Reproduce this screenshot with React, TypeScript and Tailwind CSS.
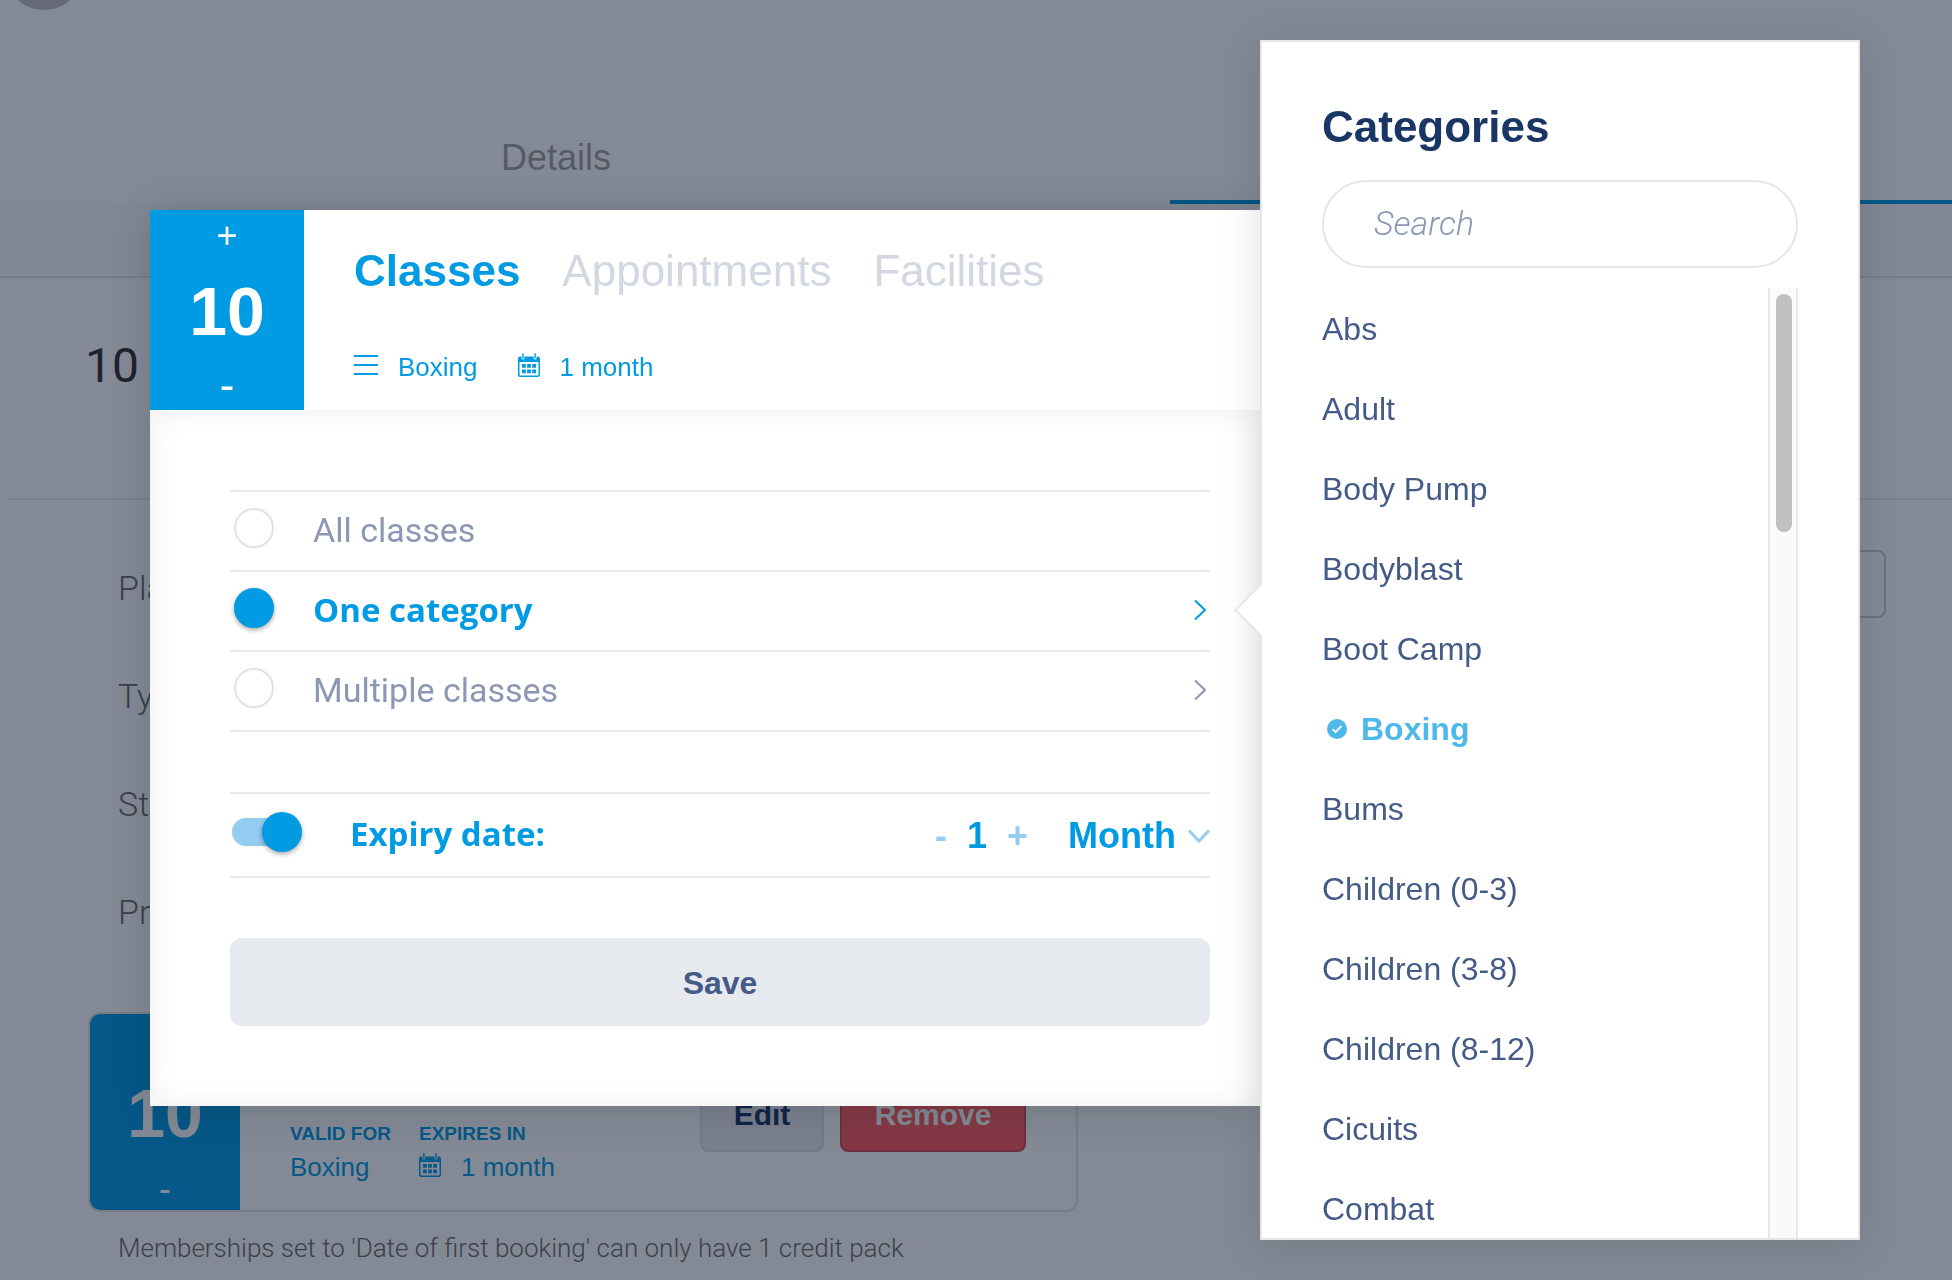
import { useState } from 'react';
import { clsx } from 'clsx';

const PLAN_FIELDS = ['Plan name', 'Type', 'Start', 'Price'];

const CREDIT_TABS = ['Classes', 'Appointments', 'Facilities'];

const CLASS_OPTIONS = [
  { id: 'all', label: 'All classes', hasMore: false },
  { id: 'one', label: 'One category', hasMore: true },
  { id: 'multiple', label: 'Multiple classes', hasMore: true },
];

const CATEGORIES = [
  'Abs',
  'Adult',
  'Body Pump',
  'Bodyblast',
  'Boot Camp',
  'Boxing',
  'Bums',
  'Children (0-3)',
  'Children (3-8)',
  'Children (8-12)',
  'Cicuits',
  'Combat',
];

function CalendarIcon() {
  return (
    <svg viewBox="0 0 22 24" className="mb-1 w-[22px] h-6 shrink-0" fill="currentColor" aria-hidden="true">
      <path
        fillRule="evenodd"
        d="M2 3.5h1.4v1.6a1.5 1.5 0 0 0 3 0V3.5h9.2v1.6a1.5 1.5 0 0 0 3 0V3.5H20a2 2 0 0 1 2 2V22a2 2 0 0 1-2 2H2a2 2 0 0 1-2-2V5.5a2 2 0 0 1 2-2ZM1.5 9v12.6a.9.9 0 0 0 .9.9h17.2a.9.9 0 0 0 .9-.9V9Z"
      />
      <rect x="4.2" width="1.4" height="5.8" rx=".7" />
      <rect x="16.4" width="1.4" height="5.8" rx=".7" />
      <path d="M4 11h3.8v3.8H4zM9.1 11h3.8v3.8H9.1zM14.2 11H18v3.8h-3.8zM4 16.5h3.8v3.8H4zM9.1 16.5h3.8v3.8H9.1zM14.2 16.5H18v3.8h-3.8z" />
    </svg>
  );
}

function MenuIcon() {
  return (
    <svg viewBox="0 0 24 20" className="mb-1 w-6 h-5 shrink-0" stroke="currentColor" strokeWidth="2" aria-hidden="true">
      <path d="M0 1h24M0 10h24M0 19h24" />
    </svg>
  );
}

function ChevronRight() {
  return (
    <svg viewBox="0 0 12 20" className="w-3 h-5" fill="none" stroke="currentColor" strokeWidth="2" aria-hidden="true">
      <path d="M1 .5l10 9.5L1 19.5" />
    </svg>
  );
}

function CheckBadge() {
  return (
    <svg viewBox="0 0 20 20" className="size-5" aria-hidden="true">
      <circle cx="10" cy="10" r="10" fill="currentColor" />
      <path d="M5.5 10.2l3.2 2.8 5.8-6" fill="none" stroke="#fff" strokeWidth="1.8" />
    </svg>
  );
}

function PageBehind() {
  return (
    <main className="min-h-screen">
      <header className="flex flex-col h-[202px]">
        <div className="-mt-[70px] ml-1 size-20 shrink-0 rounded-full bg-[#c1bfc1]" />
        <nav className="mt-auto grid grid-cols-[1170fr_782fr] text-[36px] leading-[44px] text-[#a0a0a0]">
          <a href="#details" className="pl-[501px] pb-[22px]">
            Details
          </a>
          <a href="#pricing" aria-label="Pricing" className="-mb-[2px] border-b-4 border-[#009be2]" />
        </nav>
      </header>
      <div className="h-[76px] bg-[#f9f9fa] border-b-2 border-[#e2e0e4]" />

      <h1 className="h-[220px] pt-[57px] pl-[85px] font-['Roboto'] text-[48px] leading-[62px] text-[#333]">10</h1>
      <div className="ml-2 border-t-2 border-[#ebebee]" />

      <div className="pt-[50px] pl-[118px] pr-[66px]">
        {PLAN_FIELDS.map((field, index) => (
          <div key={field} className="flex h-[108px]">
            <label
              htmlFor={`plan-${index}`}
              className="w-[600px] h-[76px] font-['Roboto'] font-light text-[34px] leading-[76px] text-[#6b6b6b]"
            >
              {field}
            </label>
            {index === 0 && (
              <input
                id={`plan-${index}`}
                className="flex-1 h-[68px] rounded-lg border-2 border-[#cbcdd3]"
              />
            )}
          </div>
        ))}
      </div>

      <section className="ml-[88px] mt-[30px] w-[990px] h-[200px] flex rounded-xl border-2 border-[#e5e3e7] overflow-hidden">
        <div className="w-[150px] bg-[#009be2] text-white flex flex-col items-center justify-between">
          <button className="h-[44px] text-[36px] leading-[44px]">+</button>
          <span className="text-[68px] leading-[76px] font-bold">10</span>
          <button className="h-[42px] text-[36px] leading-[42px]">-</button>
        </div>
        <div className="flex-1 flex px-[50px] text-[#009be2]">
          <div className="flex gap-7 pt-[106px]">
            <div>
              <p className="text-[19px] leading-7 font-bold">VALID FOR</p>
              <p className="text-[26px] leading-[38px]">Boxing</p>
            </div>
            <div>
              <p className="text-[19px] leading-7 font-bold">EXPIRES IN</p>
              <p className="flex items-center gap-5 text-[26px] leading-[38px]">
                <CalendarIcon />1 month
              </p>
            </div>
          </div>
          <div className="ml-auto flex items-center gap-4 text-[30px] font-bold">
            <button className="h-20 w-[124px] pt-1 rounded-lg border-2 border-[#dcdde6] bg-[#ebebf1] text-[#1a3665]">
              Edit
            </button>
            <button className="h-20 w-[186px] pt-1 rounded-lg border-2 border-[#d14b55] bg-[#ff5d5f] text-white">
              Remove
            </button>
          </div>
        </div>
      </section>
      <p className="pt-4 pl-[118px] font-['Roboto'] font-light text-[26px] leading-10 text-[#6b6b6b]">
        Memberships set to 'Date of first booking' can only have 1 credit pack
      </p>
    </main>
  );
}

function CreditDialog() {
  const [tab, setTab] = useState('Classes');
  const [option, setOption] = useState('one');
  const [credits, setCredits] = useState(10);
  const [expires, setExpires] = useState(true);
  const [months, setMonths] = useState(1);

  return (
    <div
      role="dialog"
      aria-label="Credit pack"
      className="mt-[170px] flex-1 min-w-0 self-start bg-white shadow-[0_4px_40px_rgba(0,0,0,0.15)]"
    >
      <div className="flex h-[200px]">
        <div className="w-[154px] shrink-0 bg-[#009be2] text-white flex flex-col items-center justify-between">
          <button onClick={() => setCredits(credits + 1)} className="h-[52px] text-[36px] leading-[52px]">
            +
          </button>
          <span className="text-[68px] leading-[76px] font-bold">{credits}</span>
          <button onClick={() => setCredits(credits - 1)} className="h-[50px] text-[44px] leading-[50px]">
            -
          </button>
        </div>
        <div className="pl-[50px] pt-[35px]">
          <div className="flex gap-[42px] text-[44px] leading-[52px]">
            {CREDIT_TABS.map((name) => (
              <button
                key={name}
                onClick={() => setTab(name)}
                className={clsx(tab === name ? 'font-bold text-[#009be2]' : 'text-[#d2d7e2]')}
              >
                {name}
              </button>
            ))}
          </div>
          <div className="mt-[50px] flex items-center text-[26px] leading-10 text-[#009be2]">
            <MenuIcon />
            <span className="ml-5 mr-10">Boxing</span>
            <CalendarIcon />
            <span className="ml-5">1 month</span>
          </div>
        </div>
      </div>

      <div className="p-20 pr-[50px] shadow-[inset_0_0_30px_rgba(0,0,0,0.07)]">
        <div className="border-t-2 border-[#e6e9ee]">
          {CLASS_OPTIONS.map((item) => {
            const isActive = option === item.id;
            return (
              <label
                key={item.id}
                className={clsx(
                  'flex h-20 pt-4 pl-1 border-b-2 border-[#e6e9ee]',
                  isActive ? 'text-[#009be2]' : 'text-[#8b97b4]'
                )}
              >
                <input
                  type="radio"
                  name="classes"
                  checked={isActive}
                  onChange={() => setOption(item.id)}
                  className="appearance-none size-10 rounded-full border-2 border-[#dee2e9] bg-white checked:border-[#009be2] checked:bg-[#009be2] checked:shadow-[0_2px_5px_rgba(0,0,0,0.35)]"
                />
                <span
                  className={clsx(
                    'ml-[39px] leading-[44px]',
                    isActive ? "font-['Open_Sans'] font-bold text-[33px]" : "font-['Roboto'] text-[34px]"
                  )}
                >
                  {item.label}
                </span>
                {item.hasMore && (
                  <span className="ml-auto mr-1 h-11 flex items-center">
                    <ChevronRight />
                  </span>
                )}
              </label>
            );
          })}
        </div>

        <div className="mt-[60px] flex items-start h-[86px] pt-4 border-y-2 border-[#e6e9ee] text-[#009be2]">
          <label className="flex items-start pl-[2px]">
            <input
              type="checkbox"
              role="switch"
              checked={expires}
              onChange={() => setExpires(!expires)}
              className="sr-only"
            />
            <span className="flex items-center w-[70px] h-11">
              <span className="w-[60px] h-7 rounded-full bg-[#95ccf1]" />
              <span className="-ml-[30px] size-10 shrink-0 rounded-full bg-[#009be2] shadow-[0_2px_5px_rgba(0,0,0,0.35)]" />
            </span>
            <span className="ml-12 font-['Open_Sans'] font-bold text-[33px] leading-[48px]">Expiry date:</span>
          </label>
          <div className="ml-auto flex items-center text-[36px] leading-[52px] font-bold">
            <button onClick={() => setMonths(months - 1)} className="text-[#95ccf1]">
              -
            </button>
            <span className="mx-5">{months}</span>
            <button onClick={() => setMonths(months + 1)} className="text-[#95ccf1]">
              +
            </button>
            <select aria-label="Expiry unit" className="ml-10 appearance-none bg-transparent">
              <option>Month</option>
            </select>
            <svg viewBox="0 0 22 14" className="ml-3 w-[22px] h-[14px]" fill="none" stroke="#95ccf1" strokeWidth="3">
              <path d="M1 1.5l10 10.5L21 1.5" />
            </svg>
          </div>
        </div>

        <button className="mt-[60px] w-full h-[88px] pt-[2px] rounded-xl bg-[#e6e9ee] text-[32px] font-bold text-[#435b86]">
          Save
        </button>
      </div>
    </div>
  );
}

function CategoriesPanel() {
  const [selected, setSelected] = useState('Boxing');
  const [query, setQuery] = useState('');
  const visible = CATEGORIES.filter((name) => name.toLowerCase().includes(query.toLowerCase()));

  return (
    <aside className="relative w-[600px] shrink-0 flex flex-col bg-white border-2 border-[#e6e6e6] px-[60px] pt-[57px] shadow-[0_6px_40px_rgba(0,0,0,0.12)]">
      <svg viewBox="0 0 28 56" className="absolute -left-7 top-[540px] w-7 h-14" aria-hidden="true">
        <path d="M28 1L1.5 28 28 55" fill="#fff" stroke="#e6e6e6" strokeWidth="2" />
      </svg>

      <h2 className="text-[44px] leading-[56px] font-bold text-[#1a3665]">Categories</h2>
      <input
        type="search"
        placeholder="Search"
        aria-label="Search"
        value={query}
        onChange={(e) => setQuery(e.target.value)}
        className="mt-[25px] h-[88px] shrink-0 rounded-full border-2 border-[#e5e5e5] px-[50px] pb-[2px] font-['Roboto'] font-light italic text-[34px] placeholder:text-[#8b97b4]"
      />

      <div className="mt-5 flex-1 min-h-0 flex">
        <ul className="flex-1 pt-px overflow-hidden">
          {visible.map((name) => {
            const isSelected = name === selected;
            return (
              <li key={name}>
                <button
                  onClick={() => setSelected(name)}
                  className={clsx(
                    'flex items-center h-20 w-full text-[32px]',
                    isSelected ? 'gap-[14px] pl-[5px] font-bold text-[#4db8ea]' : 'text-[#435b86]'
                  )}
                >
                  {isSelected && <CheckBadge />}
                  {name}
                </button>
              </li>
            );
          })}
        </ul>
        <div aria-hidden="true" className="w-[30px] pt-[6px] pl-[6px] border-x-2 border-[#e8e8e8] bg-[#fafafa]">
          <div className="w-4 h-[238px] rounded-full bg-[#c1c1c1]" />
        </div>
      </div>
    </aside>
  );
}

export default function App() {
  return (
    <div className="relative h-screen overflow-hidden bg-white font-['Liberation_Sans',sans-serif]">
      <PageBehind />
      <div className="fixed inset-0 flex bg-[#09152b]/50 py-10 pl-[150px] pr-[92px]">
        <CreditDialog />
        <CategoriesPanel />
      </div>
    </div>
  );
}
